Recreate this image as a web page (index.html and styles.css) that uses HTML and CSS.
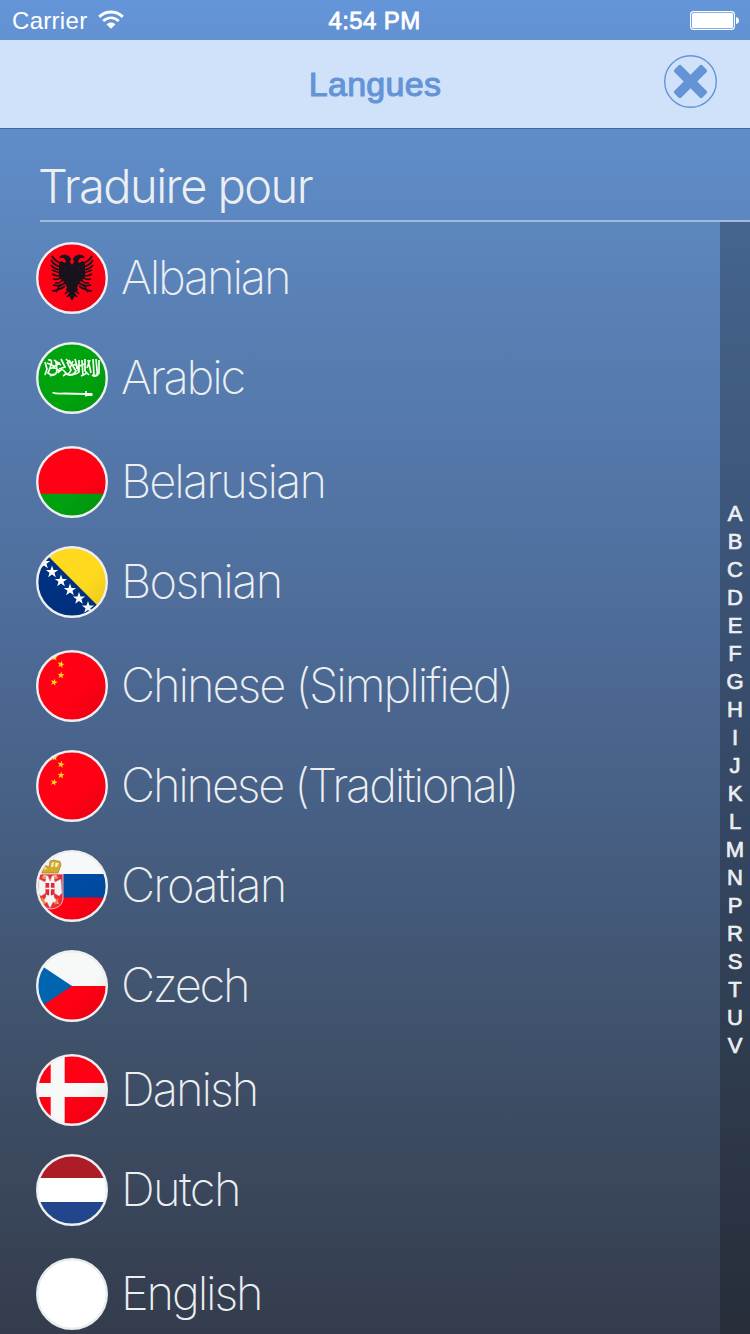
FILE: index.html
```html
<!DOCTYPE html>
<html lang="fr">
<head>
<meta charset="utf-8">
<title>Langues</title>
<link rel="stylesheet" href="styles.css">
</head>
<body>
<svg class="defs" width="0" height="0" aria-hidden="true">
  <defs>
    <clipPath id="disc"><circle cx="36" cy="36" r="35"/></clipPath>
    <linearGradient id="shade" x1="0" y1="0" x2="1" y2="1">
      <stop offset="0.6" stop-color="#000" stop-opacity="0"/>
      <stop offset="1" stop-color="#000" stop-opacity="0.1"/>
    </linearGradient>
    <path id="star" d="M0-1 .235-.324 .951-.309 .38 .124 .588 .809 0 .4-.588 .809-.38 .124-.951-.309-.235-.324Z"/>
    <g id="rim">
      <circle cx="36" cy="36" r="35" fill="url(#shade)"/>
      <circle cx="36" cy="36" r="34.8" fill="none" stroke="#edeff0" stroke-width="2.4"/>
    </g>
    <g id="china">
      <g clip-path="url(#disc)">
        <path fill="#ff0014" d="M0 0h72v72H0z"/>
        <g fill="#ffd21e">
          <use href="#star" transform="translate(18.5 7.5) scale(3.6)"/>
          <use href="#star" transform="translate(25 14.5) rotate(12) scale(3.8)"/>
          <use href="#star" transform="translate(25 25.2) rotate(5) scale(3.8)"/>
          <use href="#star" transform="translate(18 32.3) rotate(15) scale(3.8)"/>
          <use href="#star" transform="translate(1 24) scale(5)"/>
        </g>
      </g>
      <use href="#rim"/>
    </g>
  </defs>
</svg>
<div class="screen">
  <header class="status">
    <div class="carrier"><span>Carrier</span>
      <svg width="26" height="20" viewBox="0 0 26 20" fill="none" stroke="#fff">
        <path d="M1.2 6.8C8 .4 18 .4 24.8 6.8" stroke-width="3"/>
        <path d="M5.2 11C10 6.7 16 6.7 20.800 11" stroke-width="2.8"/>
        <path d="M8.600 14.400C11.200 12 14.800 12 17.400 14.400L13 18.800Z" fill="#fff" stroke="none"/>
      </svg>
    </div>
    <div class="clock">4:54 PM</div>
    <svg class="battery" width="50" height="20" viewBox="0 0 50 20">
      <rect x=".6" y=".6" width="43.800" height="17.800" rx="3" fill="none" stroke="#fff" stroke-width="1.100"/>
      <rect x="2" y="2" width="41" height="15" rx="1.500" fill="#fff"/>
      <path d="M46 6q3 .5 3 3.500t-3 3.500z" fill="#fff"/>
    </svg>
  </header>
  <nav class="bar">
    <h1 class="title">Langues</h1>
    <svg class="close" width="54" height="54" viewBox="0 0 54 54">
      <circle cx="27.500" cy="27.500" r="25.800" fill="none" stroke="#6494d5" stroke-width="1.400"/>
      <g fill="#6494d5" transform="rotate(45 27.500 27.500)">
        <rect x="7.700" y="22.700" width="39.600" height="9.600" rx="2"/>
        <rect x="22.700" y="7.700" width="9.600" height="39.600" rx="2"/>
      </g>
    </svg>
  </nav>
  <h2 class="section">Traduire pour</h2>
  <div class="body">
    <ul class="list">
      <li class="row albanian">
        <svg class="flag" viewBox="0 0 72 72"><circle cx="36" cy="36" r="35" fill="#ff0014"/>
          <g fill="#18121c" stroke="#18121c">
            <path stroke="none" d="M36 23 34 20 35 17 33 14 29 12.500 25 13.500 23 15.500 28 16 30 19 29 21 25 19 23 22 23 35 28 40 31 45 30 48 33 50 33 54 36 58.500 39 54 39 50 42 48 41 45 44 40 49 35 49 22 47 19 43 21 42 19 44 16 49 15.500 47 13.500 43 12.500 39 14 37 17 38 20Z"/>
            <path fill="none" stroke-width="1.700" d="M24 21Q19 19 16 14M24 25Q18 23 15 18M24 28Q18 27 15 23M24 31 16 28M24 34Q19 34 16 32M25 36Q21 38 17 37M27 38Q23 42 19 41M29 41Q24 45 17 43M29 44Q24 48 16 49M23 45 20 50M28 42Q24 43 24 45M48 21Q53 19 56 14M48 25Q54 23 57 18M48 28Q54 27 57 23M48 31 56 28M48 34Q53 34 56 32M47 36Q51 38 55 37M45 38Q49 42 53 41M43 41Q48 45 55 43M43 44Q48 48 56 49M49 45 52 50M44 42Q48 43 48 45M34 47 29 52M38 47 43 52M35 50 31 55M37 50 41 55"/>
          </g>
          <use href="#rim"/></svg>
        <span class="name">Albanian</span></li>
      <li class="row arabic">
        <svg class="flag" viewBox="0 0 72 72"><circle cx="36" cy="36" r="35" fill="#00a20e"/>
          <g fill="none" stroke="#f4fff2" stroke-width="1.700">
            <path d="M9 20 11 27 9 33M12 18Q17 17 15 23T12 31Q19 36 21 29L20 20M18 18 25 23M22 31Q26 25 29 30T35 28L31 20M25 17 29 25 23 27M30 17 35 22M33 18 40 29Q36 35 30 32M36 24Q41 20 41 27M39 17 43 31M43 18 43 30M46 18 47 34M49 17 49 29 53 33M52 18 55 31M54 18 51 26M57 17 58 33M60 17 61 28Q62 34 58 34M63 18 63 31Q60 36 56 33M14 34 18 32M45 34 51 31M16 26 24 21M27 34 31 31M11 21 18 24M13 27Q20 24 24 30M37 19 34 26M36 33 42 31M44 24 48 22"/>
            <path stroke-width="1.800" d="M16.500 50.500Q20 52 28 51.500L49 52"/><path stroke-width="3" d="M49 52.500H56.500"/><path d="M50 49V54.500"/>
          </g><use href="#rim"/></svg>
        <span class="name">Arabic</span></li>
      <li class="row spaced belarusian">
        <svg class="flag" viewBox="0 0 72 72"><g clip-path="url(#disc)"><path fill="#ff0014" d="M0 0h72v48H0z"/><path fill="#00a010" d="M0 47.700h72V72H0z"/></g><use href="#rim"/></svg>
        <span class="name">Belarusian</span></li>
      <li class="row bosnian">
        <svg class="flag" viewBox="0 0 72 72"><g clip-path="url(#disc)"><path fill="#003080" d="M0 0h72v72H0z"/><path fill="#ffd91e" d="M2 0H72V70Z"/>
          <g fill="#fff"><use href="#star" transform="translate(8 17) scale(6.500)"/><use href="#star" transform="translate(16 26) scale(6.500)"/><use href="#star" transform="translate(25 35) scale(6.500)"/><use href="#star" transform="translate(34 44) scale(6.500)"/><use href="#star" transform="translate(43 52.500) scale(6.500)"/><use href="#star" transform="translate(52 61.500) scale(6.500)"/></g></g><use href="#rim"/></svg>
        <span class="name">Bosnian</span></li>
      <li class="row spaced simplified">
        <svg class="flag" viewBox="0 0 72 72"><use href="#china"/></svg>
        <span class="name">Chinese (Simplified)</span></li>
      <li class="row traditional">
        <svg class="flag" viewBox="0 0 72 72"><use href="#china"/></svg>
        <span class="name">Chinese (Traditional)</span></li>
      <li class="row croatian">
        <svg class="flag" viewBox="0 0 72 72"><g clip-path="url(#disc)"><path fill="#f7f8f8" d="M0 0h72v72H0z"/><path fill="#004ba3" d="M0 24h72v24H0z"/><path fill="#ff0014" d="M0 47.500h72V72H0z"/>
          <path fill="#ed2a35" stroke="#e8dede" stroke-width=".8" d="M1 24H27V49Q26 58 15 59Q3 58 1 49Z"/>
          <path fill="#f3f3f3" stroke="#b5aaaa" stroke-width=".5" d="M14 31 12 26 8 25 6 28 10 29 9 32 3 29 2 43 5 46 10 43 10 47 5 54 11 52 14 58 17 52 23 54 18 47 18 43 23 46 26 43 25 29 19 32 18 29 22 28 20 25 16 26Z"/>
          <path fill="#e52735" d="M9.500 33H18.500V44Q14 47 9.500 44Z"/><path stroke="#fff" stroke-width="1.600" d="M14 33V46M9.500 38.500H18.500"/>
          <path fill="#d6aa28" stroke="#8d7220" stroke-width=".6" d="M6 23 5 18 9 15 13 17 14 11 18 10 24 11.500 25 15 22 23Z"/>
          <path fill="#f5efd5" d="M16 12.500 18 12 17 17 15 17ZM19.500 12.500 23 13 21 17 19 17ZM8 17.500 11 18 9 20Z"/>
          <path fill="none" stroke="#f08a1c" stroke-width="2" d="M7 27.500H10M18 27.500H21M6 48 9 54M22 49 19 54"/></g><use href="#rim"/></svg>
        <span class="name">Croatian</span></li>
      <li class="row czech">
        <svg class="flag" viewBox="0 0 72 72"><g clip-path="url(#disc)"><path fill="#f7f8f8" d="M0 0h72v36H0z"/><path fill="#ff0014" d="M0 36h72v36H0z"/><path fill="#0064ae" d="M-18 0 36 36-18 72Z"/></g><use href="#rim"/></svg>
        <span class="name">Czech</span></li>
      <li class="row spaced danish">
        <svg class="flag" viewBox="0 0 72 72"><g clip-path="url(#disc)"><path fill="#ff0014" d="M0 0h72v72H0z"/><path fill="#f7f8f8" d="M14.700 0h14v72h-14zM0 29h72v14H0z"/></g><use href="#rim"/></svg>
        <span class="name">Danish</span></li>
      <li class="row dutch">
        <svg class="flag" viewBox="0 0 72 72"><g clip-path="url(#disc)"><path fill="#fff" d="M0 0h72v72H0z"/><path fill="#ad1d28" d="M0 0h72v24H0z"/><path fill="#21468b" d="M0 48h72v24H0z"/></g><circle cx="36" cy="36" r="34.800" fill="none" stroke="#edeff0" stroke-width="2.400"/></svg>
        <span class="name">Dutch</span></li>
      <li class="row spaced english">
        <svg class="flag" viewBox="0 0 72 72"><circle cx="36" cy="36" r="35" fill="#fff"/><circle cx="36" cy="36" r="34.800" fill="none" stroke="#e8ecee" stroke-width="2.400"/></svg>
        <span class="name">English</span></li>
    </ul>
    <ol class="index">
      <li>A</li><li>B</li><li>C</li><li>D</li><li>E</li><li>F</li><li>G</li><li>H</li><li>I</li><li>J</li><li>K</li><li>L</li><li>M</li><li>N</li><li>P</li><li>R</li><li>S</li><li>T</li><li>U</li><li>V</li>
    </ol>
  </div>
</div>
</body>
</html>
```
FILE: styles.css
```css
* { box-sizing: border-box; margin: 0; padding: 0; }
body { width: 750px; height: 1334px; overflow: hidden; }
.defs { display: block; }
.screen {
  display: flex;
  flex-direction: column;
  width: 750px;
  height: 1334px;
  overflow: hidden;
  font-family: Inter, "Liberation Sans", sans-serif;
  color: #eceff1;
  background: linear-gradient(#6495d9 0, #6190ce 60px, #5f8cc8 140px, #587fb3 330px, #5274a5 500px, #486289 770px, #41546f 1000px, #343c4c 1334px);
}
.status {
  flex: none;
  display: grid;
  grid-template-columns: 1fr auto 1fr;
  align-items: center;
  height: 40px;
  padding: 1px 10px 0 12px;
  color: #fff;
  font-family: "Liberation Sans", sans-serif;
}
.carrier { display: flex; align-items: center; gap: 11px; font-size: 24px; line-height: 39px; letter-spacing: .3px; }
.carrier svg { margin-top: -2px; }
.clock { font-size: 24px; letter-spacing: .4px; margin-right: 3px; -webkit-text-stroke: .8px #fff; }
.battery { justify-self: end; }
.bar {
  flex: none;
  display: grid;
  grid-template-columns: 1fr auto 1fr;
  align-items: center;
  height: 89px;
  padding: 0 33px;
  background: #d0e2fa;
  border-bottom: 1px solid #41689c;
}
.title {
  grid-column: 2;
  font: 400 34px/40px "Liberation Sans", sans-serif;
  letter-spacing: .3px;
  color: #6494d5;
  -webkit-text-stroke: 1.1px #6494d5;
}
.close { justify-self: end; margin-top: -7px; }
.section {
  flex: none;
  height: 93px;
  margin-left: 40px;
  padding-top: 28px;
  border-bottom: 2px solid #a3b9dc;
  font-size: 47px;
  line-height: 58px;
  font-weight: 300;
  letter-spacing: -1.55px;
  text-indent: -2px;
}
.body { flex: 1; display: flex; min-height: 0; }
.list { flex: 1; list-style: none; padding: 6px 0 0 36px; }
.row { display: flex; align-items: center; gap: 13px; height: 100px; letter-spacing: -2px; }
.spaced { margin-top: 4px; }
.albanian { letter-spacing: -2.2px; }
.arabic { letter-spacing: -2.2px; }
.bosnian { letter-spacing: -1.7px; }
.simplified { letter-spacing: -2.05px; }
.traditional { letter-spacing: -2.2px; }
.croatian { letter-spacing: -1.75px; }
.czech { letter-spacing: -2.3px; }
.dutch { letter-spacing: -1.6px; }
.english { letter-spacing: -2.15px; }
.flag { flex: none; width: 72px; height: 72px; }
.name { padding-bottom: 2px; font-size: 47px; font-weight: 200; line-height: 60px; white-space: nowrap; }
.index {
  width: 30px;
  padding-top: 278px;
  list-style: none;
  background: rgba(0, 0, 0, .25);
  text-align: center;
  font: 22px/28px "Liberation Sans", sans-serif;
  -webkit-text-stroke: .7px #eceff1;
}
```
